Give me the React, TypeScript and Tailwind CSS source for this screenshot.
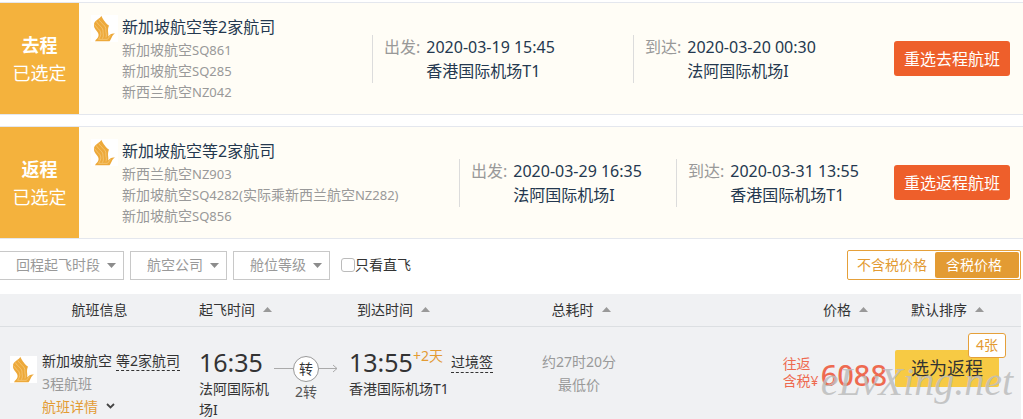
import React from "react";

function AirlineLogo() {
  return (
    <svg viewBox="0 0 27 27" className="size-[27px] shrink-0 bg-white" aria-hidden="true">
      <path
        d="M10.300 0.800C9.500 3.500 3.500 5.500 3 9C2.700 11.500 3.500 13 4.500 14.500C6.500 17 8 18.500 7.500 21C7 23.500 5 24 4 26.200H18.500C20.500 24.500 20.500 20.500 24 18.500C21 18 19 19 17.300 21.500C17.800 18 16 15.500 18 10.500C15.500 9.500 12 4.500 10.300 0.800Z"
        fill="#eda93a"
      />
      <path
        d="M7.800 4.500C10 8.500 15.500 10.500 14.800 15C14.500 17.500 16 19 15 22.500M5.300 6.500C7.500 10.500 12.500 12.500 12 16.500C12 19 13 20.500 11.500 23.500M3.500 9.500C5 12.500 9.500 14.500 9.800 18C10 20.500 9 22.500 7.500 24.300H16.500L19.500 20.500"
        fill="none"
        stroke="#fbdca4"
        strokeWidth="0.5"
      />
    </svg>
  );
}

type Stop = { label: string; time: string; airport: string };

function StopInfo({ label, time, airport }: Stop) {
  return (
    <div className="flex h-12 gap-[6px] border-l border-[#dcdcdc] pl-[11px] text-base leading-6 whitespace-nowrap text-[#24384f]">
      <span className="text-[#999]">{label}:</span>
      <div>
        <div>{time}</div>
        <div>{airport}</div>
      </div>
    </div>
  );
}

type Leg = {
  direction: string;
  flights: [string, string, string?, string?][];
  depart: Stop;
  arrive: Stop;
  columns: string;
};

const legs: Leg[] = [
  {
    direction: "去程",
    flights: [
      ["新加坡航空", "SQ861"],
      ["新加坡航空", "SQ285"],
      ["新西兰航空", "NZ042"],
    ],
    depart: { label: "出发", time: "2020-03-19 15:45", airport: "香港国际机场T1" },
    arrive: { label: "到达", time: "2020-03-20 00:30", airport: "法阿国际机场I" },
    columns: "grid-cols-[293fr_261fr_261fr_auto]",
  },
  {
    direction: "返程",
    flights: [
      ["新西兰航空", "NZ903"],
      ["新加坡航空", "SQ4282(", "实际乘新西兰航空", "NZ282)"],
      ["新加坡航空", "SQ856"],
    ],
    depart: { label: "出发", time: "2020-03-29 16:35", airport: "法阿国际机场I" },
    arrive: { label: "到达", time: "2020-03-31 13:55", airport: "香港国际机场T1" },
    columns: "grid-cols-[380fr_217fr_218fr_auto]",
  },
];

function LegCard({ leg }: { leg: Leg }) {
  return (
    <section className="flex border-y border-[#e4e7ee] bg-[#fffdf6]">
      <div className="flex w-[79px] shrink-0 flex-col items-center justify-center bg-[#f4b23d] text-lg leading-7 text-white">
        <strong>{leg.direction}</strong>
        <span>已选定</span>
      </div>
      <div className={"grid flex-1 items-center pr-[13px] " + leg.columns}>
        <div className="flex gap-1 py-3 pl-3">
          <AirlineLogo />
          <div className="whitespace-nowrap">
            <h2 className="text-base leading-6 text-[#24384f]">新加坡航空等2家航司</h2>
            <ul className="text-sm leading-[21px] text-[#999]">
              {leg.flights.map(([name, code, note, noteCode]) => (
                <li key={code} className="h-[21px]">
                  {name}
                  <span className="text-[13px]">{code}</span>
                  {note}
                  <span className="text-[13px]">{noteCode}</span>
                </li>
              ))}
            </ul>
          </div>
        </div>
        <StopInfo {...leg.depart} />
        <StopInfo {...leg.arrive} />
        <button className="h-[35px] rounded-[3px] bg-[#ee5f2b] px-[10px] text-base whitespace-nowrap text-white">
          重选{leg.direction}航班
        </button>
      </div>
    </section>
  );
}

function FilterSelect({ label, className }: { label: string; className: string }) {
  return (
    <div className="grid items-center">
      <select
        aria-label={label}
        className={"col-start-1 row-start-1 h-[29px] appearance-none border border-[#c8c8c8] bg-white pr-[23px] pl-4 text-sm text-[#999] " + className}
      >
        <option>{label}</option>
      </select>
      <svg
        viewBox="0 0 9 5"
        className="pointer-events-none col-start-1 row-start-1 mr-2 h-[5px] w-[9px] justify-self-end"
        aria-hidden="true"
      >
        <path d="M0 0H9L4.500 5Z" fill="#8c8c8c" />
      </svg>
    </div>
  );
}

function SortButton({ label }: { label: string }) {
  return (
    <button className="inline-flex items-center gap-2">
      {label}
      <svg viewBox="0 0 9 5" className="h-[5px] w-[9px]" aria-hidden="true">
        <path d="M0 5H9L4.500 0Z" fill="#999" />
      </svg>
    </button>
  );
}

export default function App() {
  return (
    <main className="bg-white pt-[2px] text-sm text-[#333] [font-family:'Noto_Sans','Noto_Sans_CJK_SC',sans-serif]">
      <div className="flex flex-col gap-[11px]">
        {legs.map((leg) => (
          <LegCard key={leg.direction} leg={leg} />
        ))}
      </div>

      <div className="flex items-center justify-between pt-[11px] pr-[2px] pb-[14px]">
        <div className="flex items-center gap-[6px]">
          <FilterSelect label="回程起飞时段" className="border-l-0" />
          <FilterSelect label="航空公司" className="" />
          <FilterSelect label="舱位等级" className="" />
          <label className="ml-[5px] flex items-center">
            <input type="checkbox" className="size-[14px] appearance-none rounded-[3px] border border-[#bbb] bg-white" />
            只看直飞
          </label>
        </div>
        <div className="flex h-[30px] rounded-[2px] border border-[#e5a03a] p-px">
          <button className="px-2 text-[#e39b33]">不含税价格</button>
          <button className="rounded-[2px] bg-[#e39b33] pr-[17px] pl-[11px] text-white">含税价格</button>
        </div>
      </div>

      <div className="pr-[2px]">
        <table className="w-full table-fixed bg-[#f0f1f3]">
          <colgroup>
            <col className="w-[199px]" />
            <col className="w-[75px]" />
            <col className="w-[75px]" />
            <col className="w-[151px]" />
            <col className="w-[158px]" />
            <col className="w-[237px]" />
            <col className="w-[126px]" />
          </colgroup>
          <thead>
            <tr className="h-8 border-b border-[#dcdfe2] whitespace-nowrap [&>th]:font-normal">
              <th>航班信息</th>
              <th className="text-left"><SortButton label="起飞时间" /></th>
              <th />
              <th className="pl-2 text-left"><SortButton label="到达时间" /></th>
              <th className="pl-1"><SortButton label="总耗时" /></th>
              <th className="pr-[27px] text-right"><SortButton label="价格" /></th>
              <th className="pl-4 text-left"><SortButton label="默认排序" /></th>
            </tr>
          </thead>
          <tbody>
            <tr className="align-top whitespace-nowrap">
              <td className="pt-[22px] pl-[10px]">
                <div className="flex gap-[5px]">
                  <div className="pt-[7px]"><AirlineLogo /></div>
                  <div className="leading-[23px]">
                    <div className="flex items-start gap-1">
                      新加坡航空
                      <span className="mt-[2px] border-b border-dashed border-[#333] leading-[19px]">等2家航司</span>
                    </div>
                    <div className="text-[#999]">3程航班</div>
                    <a href="#detail" className="flex items-center gap-2 text-[#e39b33]">
                      航班详情
                      <svg viewBox="0 0 9 6" className="h-[6px] w-[9px]" aria-hidden="true">
                        <path d="M1 1L4.500 4.500L8 1" fill="none" stroke="#444" strokeWidth="1.800" />
                      </svg>
                    </a>
                  </div>
                </div>
              </td>
              <td className="pt-[19px] whitespace-normal">
                <div className="text-[25px] leading-8">16:35</div>
                <div className="leading-[21px]">法阿国际机场I</div>
              </td>
              <td className="pt-[29px]">
                <div className="flex w-16 flex-col items-center">
                  <div className="flex w-full items-center">
                    <span className="h-px flex-1 bg-[#aaa]" />
                    <span className="flex size-[26px] items-center justify-center rounded-full border border-[#999] bg-white">转</span>
                    <svg viewBox="0 0 19 9" className="h-[9px] w-[19px]" aria-hidden="true">
                      <path d="M0 4.500H18M14 1L18 4.500L14 8" fill="none" stroke="#aaa" />
                    </svg>
                  </div>
                  <span className="leading-5 text-[#555]">2转</span>
                </div>
              </td>
              <td className="pt-[19px]">
                <div className="flex h-8 items-start">
                  <span className="text-[25px] leading-8">13:55</span>
                  <span className="leading-5 text-[#e39b33]">+2天</span>
                  <span className="mt-[5px] ml-2 border-b border-dashed border-[#333] leading-[21px]">过境签</span>
                </div>
                <div className="leading-[21px]">香港国际机场T1</div>
              </td>
              <td className="pt-[23px] text-center leading-[23px] text-[#999]">
                <div>约27时20分</div>
                <div>最低价</div>
              </td>
              <td className="pt-7 pr-2">
                <div className="flex items-end justify-end gap-[2px] text-[#ee6a50]">
                  <div className="pb-[2px] leading-[17px]">
                    <div>往返</div>
                    <div>含税¥</div>
                  </div>
                  <strong className="text-[29px] leading-8 font-medium">6088</strong>
                </div>
              </td>
              <td>
                <div className="relative mt-[23px] mb-8 w-[104px]">
                  <button className="h-[37px] w-full rounded-[2px] bg-[#f7ca44] text-lg">选为返程</button>
                  <span className="absolute -top-[17px] -right-[7px] flex h-[25px] items-center rounded-[3px] border border-[#e5a03a] bg-white px-[7px] text-[#e39b33]">
                    4张
                  </span>
                  <span className="pointer-events-none absolute top-3 -right-[14px] text-[40px] leading-10 text-[#bdbdbd]/85 italic [font-family:'Liberation_Serif',serif]">
                    eLvXing.net
                  </span>
                </div>
              </td>
            </tr>
          </tbody>
        </table>
      </div>
    </main>
  );
}
